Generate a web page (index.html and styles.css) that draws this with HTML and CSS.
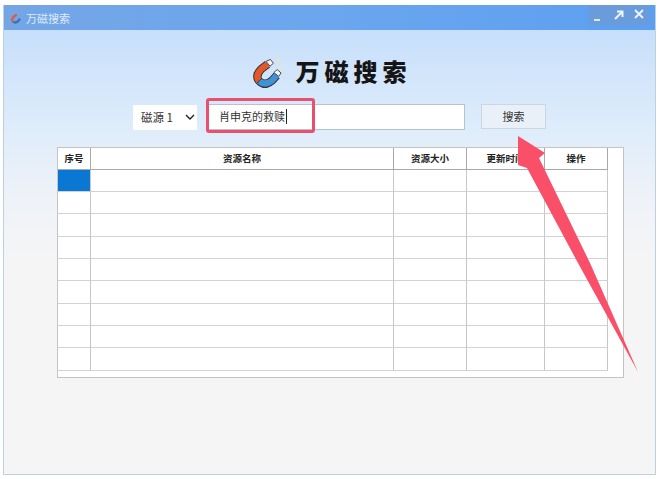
FILE: index.html
```html
<!DOCTYPE html>
<html lang="zh">
<head>
<meta charset="utf-8">
<title>万磁搜索</title>
<link rel="stylesheet" href="styles.css">
</head>
<body>
<div class="window">
  <header class="titlebar">
    <div class="title-left">
      <svg class="app-icon" viewBox="0 0 30 30" aria-hidden="true">
        <path d="M17 6 L8 13 Q2 20 8 24" fill="none" stroke="#d9603f" stroke-width="6"/>
        <path d="M8 24 Q14 29 21 22 L25 17" fill="none" stroke="#3f6fb2" stroke-width="6"/>
      </svg>
      <span class="title-text">万磁搜索</span>
    </div>
    <div class="win-controls">
      <svg class="controls-svg" viewBox="0 0 60 20" aria-hidden="true">
        <path d="M5 15 H11" stroke="#dce9fa" stroke-width="2" fill="none"/>
        <path d="M26 14 L33 7 M28 6.500 H33.500 V12" stroke="#eef5fd" stroke-width="2" fill="none"/>
        <path d="M46 5 L54 13 M54 5 L46 13" stroke="#eef5fd" stroke-width="1.800" fill="none"/>
      </svg>
    </div>
  </header>

  <main class="content">
    <div class="brand">
      <svg class="logo" viewBox="0 0 32 32" aria-hidden="true">
        <path d="M27 1 L24 6 M30 9 L26 11" stroke="#f2e6a6" stroke-width="1.500" fill="none"/>
        <path d="M15 7.500 L8.500 12.500 Q2 19 6 24.500" fill="none" stroke="#333" stroke-width="8.500"/>
        <path d="M15 7.500 L8.500 12.500 Q2 19 6 24.500" fill="none" stroke="#e4572a" stroke-width="6.500"/>
        <path d="M6 24.500 Q12 31 19.500 24.500 L24.500 19" fill="none" stroke="#333" stroke-width="8.500"/>
        <path d="M6.500 25 Q12 30 19.500 24.500 L24.500 19" fill="none" stroke="#3e93d6" stroke-width="6.500"/>
        <path d="M13.500 4.500 L17.500 9.500 L21 6.500 L18 2.500 Z" fill="#f4f6fa" stroke="#444" stroke-width="1"/>
        <path d="M21.500 16 L26.500 20 L29 16.500 L25 13 Z" fill="#f4f6fa" stroke="#444" stroke-width="1"/>
      </svg>
      <h1 class="brand-name">万磁搜索</h1>
    </div>

    <div class="search-row">
      <div class="source-select">
        <span>磁源 1</span>
        <svg class="chevron" viewBox="0 0 10 6" aria-hidden="true"><path d="M1 1 L5 5 L9 1" fill="none" stroke="#222" stroke-width="1.400"/></svg>
      </div>
      <div class="search-input"><span class="typed">肖申克的救赎</span></div>
      <button class="search-btn" type="button">搜索</button>
    </div>

    <div class="grid-box">
      <table class="grid">
        <colgroup>
          <col class="c1"><col class="c2"><col class="c3"><col class="c4"><col class="c5">
        </colgroup>
        <thead>
          <tr><th>序号</th><th>资源名称</th><th>资源大小</th><th>更新时间</th><th>操作</th></tr>
        </thead>
        <tbody>
          <tr class="r22"><td class="selected"></td><td></td><td></td><td></td><td></td></tr>
          <tr class="r22"><td></td><td></td><td></td><td></td><td></td></tr>
          <tr class="r23"><td></td><td></td><td></td><td></td><td></td></tr>
          <tr class="r22"><td></td><td></td><td></td><td></td><td></td></tr>
          <tr class="r22"><td></td><td></td><td></td><td></td><td></td></tr>
          <tr class="r23"><td></td><td></td><td></td><td></td><td></td></tr>
          <tr class="r22"><td></td><td></td><td></td><td></td><td></td></tr>
          <tr class="r22"><td></td><td></td><td></td><td></td><td></td></tr>
          <tr class="r23"><td></td><td></td><td></td><td></td><td></td></tr>
        </tbody>
      </table>
    </div>
  </main>
</div>

<div class="highlight"></div>
<svg class="arrow" viewBox="0 0 660 479" aria-hidden="true">
  <path d="M518 136 L545 153 L539 158 L590 263 L638 372 L578 263 L527 168 L518 165 Z" fill="#f94f68"/>
</svg>
</body>
</html>
```

FILE: styles.css
```css
* { box-sizing: border-box; }

html, body {
  margin: 0;
  height: 100%;
  background: #fff;
  overflow: hidden;
}

body {
  padding: 5px 4px 4px 3px;
  font-family: "Noto Sans CJK SC", "Liberation Sans", sans-serif;
  color: #222;
}

.window {
  width: 653px;
  height: 470px;
  display: flex;
  flex-direction: column;
  border: 1px solid #b9d2de;
  border-top: 0;
  background: #f5f5f6;
}

.titlebar {
  height: 25px;
  flex: none;
  display: flex;
  justify-content: space-between;
  background: linear-gradient(90deg, #74a6e6 0%, #6ba6ee 50%, #5c9ff0 100%);
}

.title-left {
  display: flex;
  align-items: center;
  gap: 4px;
  padding-left: 6px;
  height: 25px;
}

.app-icon { width: 12px; height: 12px; }

.title-text {
  font-size: 11px;
  color: #dfeafa;
}

.win-controls {
  width: 60px;
  height: 20px;
  margin-right: 6px;
  background: #6a9cdc;
}

.controls-svg { display: block; width: 60px; height: 20px; }

.content {
  flex: 1;
  padding: 27px 33px 0 53px;
  background: linear-gradient(180deg, #c7dffb 0%, #dcebfb 20%, #eef2f8 37%, #f5f5f6 52%, #f5f5f6 100%);
}

.brand {
  display: flex;
  justify-content: center;
  align-items: flex-start;
  gap: 12px;
  height: 32px;
  margin-left: -15px;
}

.logo { width: 31px; height: 31px; }

.brand-name {
  margin: 0;
  font-size: 24px;
  font-weight: 900;
  letter-spacing: 5px;
  line-height: 28px;
  color: #151515;
}

.search-row {
  display: flex;
  align-items: flex-start;
  margin-top: 15px;
  margin-left: 76px;
}

.source-select {
  width: 64px;
  height: 25px;
  margin-top: 1px;
  display: flex;
  align-items: center;
  justify-content: space-between;
  padding: 0 2px 2px 8px;
  background: #fff;
  font-size: 11.500px;
  color: #333;
}

.chevron { width: 10px; height: 6px; }

.search-input {
  width: 258px;
  height: 26px;
  margin-left: 10px;
  display: flex;
  align-items: center;
  padding: 0 0 2px 11px;
  background: #fff;
  border: 1px solid #b4c3cf;
  font-size: 11px;
}

.typed {
  padding-right: 1px;
  border-right: 1px solid #222;
  line-height: 15px;
  color: #333;
}

.search-btn {
  width: 65px;
  height: 25px;
  margin-left: 16px;
  padding: 0 0 2px;
  background: #eaf0f8;
  border: 1px solid #ccd6e2;
  font: inherit;
  font-size: 11px;
  color: #333;
}

.grid-box {
  width: 567px;
  height: 231px;
  margin-top: 17px;
  background: #fff;
  border: 1px solid #c4c4c4;
}

.grid {
  width: 550px;
  table-layout: fixed;
  border-collapse: separate;
  border-spacing: 0;
}

.c1 { width: 33px; }
.c2 { width: 303px; }
.c3 { width: 73px; }
.c4 { width: 78px; }
.c5 { width: 63px; }

.grid th {
  height: 22px;
  padding: 0 0 2px;
  font-size: 9.500px;
  font-weight: 700;
  color: #222;
  background: #fff;
  border-right: 1px solid #a9a9a9;
  border-bottom: 1px solid #a9a9a9;
}

.grid td {
  padding: 0;
  border-right: 1px solid #c8c8c8;
  border-bottom: 1px solid #d2d2d2;
}

.r22 td { height: 22px; }
.r23 td { height: 23px; }

.grid td.selected { background: #0a78d2; }

.highlight {
  position: absolute;
  left: 206px;
  top: 98px;
  width: 109px;
  height: 35px;
  border: 3px solid #e8506e;
  border-radius: 3px;
}

.arrow {
  position: absolute;
  left: 0;
  top: 0;
  width: 660px;
  height: 479px;
  pointer-events: none;
}
```
